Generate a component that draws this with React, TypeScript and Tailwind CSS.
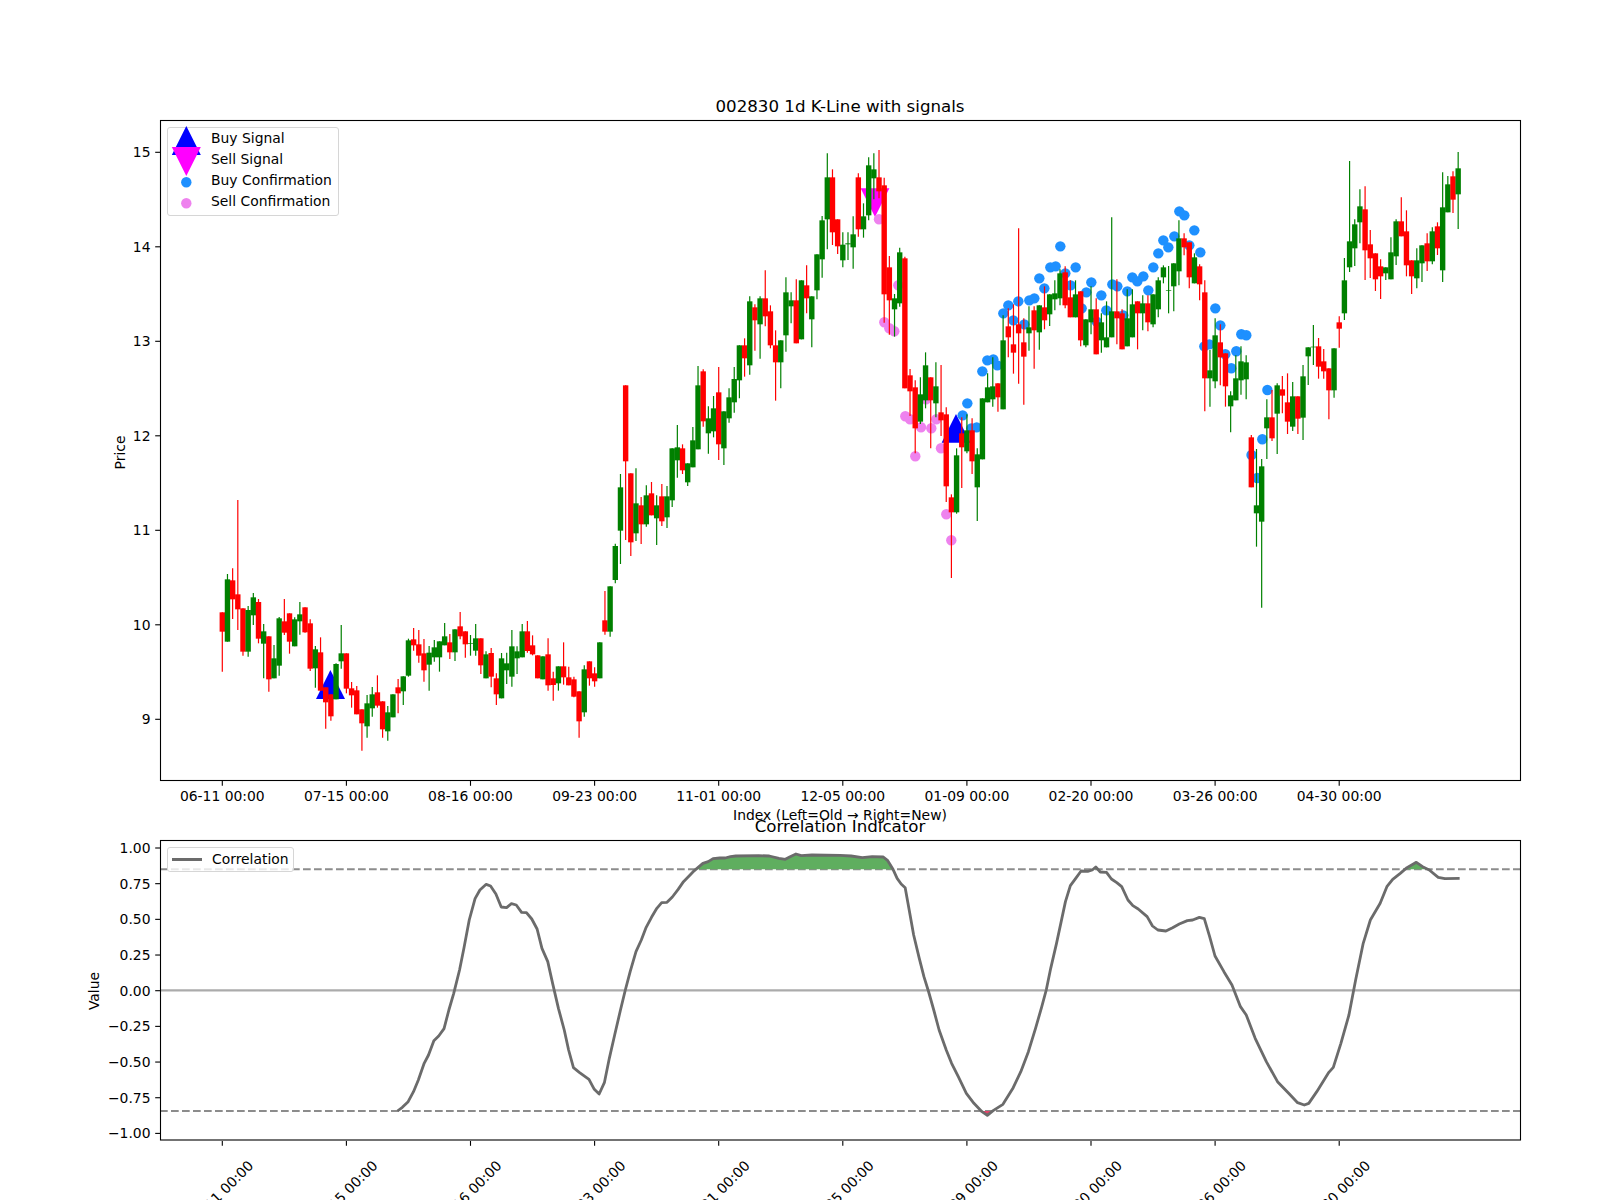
// K-line chart with signals and correlation indicator, redrawn as inline svg
type Candle = { up: boolean; top: number; bottom: number; high: number; low: number }

// each group: y offset of the read-out, then candles as colour + body top, body bottom, wick top, wick bottom
// values are in thirds of a pixel
const RAW: [number, string][] = [
  [480, "r397,455,397,575 g298,485,282,485 r301,358,265,417 r343,388,60,450 r385,515,385,527 g390,515,378,530 g352,406,339,435 r366,476,357,490 g454,491,432,595 r469,598,469,635 g535,595,495,595 g415,557,411,587 r424,458,357,465 r400,485,400,521 g418,499,412,499 g403,424,366,464 r382,457,382,458 r430,566,418,573 g508,565,498,623 r517,632,472,632 r622,667,622,746 r643,709,643,722 g552,658,550,658 g520,544,435,566 r520,626,520,640 r625,646,606,683 r631,703,618,703 r688,730,688,812 g670,739,645,773 g643,685,621,710 r637,677,586,683 r664,748,664,773 g697,754,678,782 g643,712,643,712 r622,640,597,700 g589,634,589,675 g481,587,476,590 r478,496,444,512 r493,527,450,548 r520,571,477,605 g518,554,498,632 g502,532,480,545 g484,532,484,575 g469,496,429,496 r487,517,462,537 g448,517,448,543 r439,469,396,478 r454,493,454,533 g490,492,465,527 g475,512,432,527 r475,556,475,582 g523,595,514,595 r519,590,504,622 r595,643,580,675 g535,655,519,655 g550,571,518,612 g499,590,450,620 g514,535,499,582 g454,532,432,532 r454,513,423,518 r496,523,466,526 r526,595,526,595 g529,598,529,598 r523,616,475,632 r595,615,575,662 g559,610,559,632 r559,592,487,614 r592,616,560,616 r598,650,590,652 r634,724,634,773 g568,697,556,710 r544,595,544,617 r580,604,562,620 g487,595,487,595 r421,455,333,464 g319,455,319,470"],
  [380, "g498,600,491,610 g322,452,282,552 r16,244,16,480 r280,487,280,528 g370,460,265,483 r376,433,351,492 g346,433,316,440 r340,406,306,406 g376,415,346,495 r349,424,312,438 g349,412,318,444 g205,361,205,381 g202,241,135,293 r205,271,193,282 g250,307,250,318 g181,262,141,262 g16,208,-42,208 r-26,124,-32,140 g115,160,79,221 g85,154,48,172 r37,193,-39,240 g94,205,94,255 g52,115,25,128 g-3,67,-39,98"],
  [130, "g646,751,646,805 r646,685,625,740 g514,706,499,734 r532,571,523,662 g505,583,499,686 r505,559,421,589 r544,646,526,655 r646,697,601,812 g631,697,631,775 g487,616,442,665 g511,529,487,580 r511,640,448,640 g451,628,451,628 r466,505,406,550 g499,568,499,652 g373,481,373,508 g271,388,258,443 g142,268,70,358 r142,307,118,345 r268,349,268,372 g344,391,307,412 g340,343,307,390 g313,352,259,416 r142,298,130,320 g259,298,220,323 g106,256,82,271 g118,145,70,208 r142,184,60,205"],
  [140, "r136,463,113,548 r382,481,348,584 g475,508,462,590 g337,490,323,500"],
  [130, "r385,775,380,775"],
  [340, "r106,154,87,228 r142,265,121,340 g163,245,112,252 g76,181,37,205 r112,181,112,325 g139,190,67,232 r217,241,75,288 r223,439,202,486 r472,517,463,714 g346,517,325,521 r280,322,232,444 g271,334,223,340 r271,364,235,402 g343,442,325,543 g175,358,175,358 g142,187,100,187 g139,178,52,200 r130,172,130,215"],
  [200, "g421,628,346,628 r379,412,325,472 r433,458,313,521 r373,400,85,551 r427,470,355,614 g382,400,319,452 r331,391,319,506 g316,397,316,449 r322,361,259,388 g283,343,283,378 g280,298,241,331 g220,295,208,316 r217,316,199,325 r292,352,241,352 g283,352,241,352 r274,421,274,439 g358,436,358,442 g328,367,259,403 r328,463,295,463 g367,421,340,458 g412,442,304,442 g334,412,52,412 r334,355,238,433 r340,448,328,448 g355,439,268,439 g313,412,268,412 r304,340,304,448 g310,340,286,391 r310,367,286,394 g283,373,283,382 g241,328,232,352 g202,232,196,250 g270,272,198,340 g190,259,190,334 g115,214,61,256 r115,142,100,166 r127,232,127,265 g172,250,160,250 r199,253,193,301 r277,535,241,634 g511,535,450,620 g406,544,355,565 r427,472,373,556 r460,559,460,620 g586,619,574,697 g535,601,466,601 g484,541,439,584 g487,538,466,598"],
  [140, "r892,1042,885,1042 g1096,1120,927,1220 g979,1145,957,1403 g832,865,778,957 r832,895,750,903 g736,821,730,942 r748,767,708,820 r787,845,700,882 g769,860,726,873 r769,836,769,882 g709,833,675,900 g622,649,622,735 g620,622,555,675 r619,680,594,716 r664,694,627,716 r685,751,685,838 g625,751,625,773 r547,566,529,623 g421,520,354,540 g304,382,63,396 g253,325,238,378 g199,247,148,310 r208,331,139,420 r313,355,270,414 r340,418,340,453 r379,409,358,477 g382,400,382,420 g337,418,292,418 g244,349,238,375 r244,289,172,289 r274,376,211,409 r361,409,361,462 g361,415,325,445 g316,370,316,426 r310,364,280,393 g274,364,262,373 r259,325,247,345 g202,391,97,426 g133,217,108,217 r109,179,94,219 g85,163,36,267"],
]

const candles: Candle[] = RAW.flatMap(([offset, row]) =>
  row.split(" ").map((c) => {
    const [top, bottom, high, low] = c.slice(1).split(",").map((v) => offset + Number(v) / 3)
    return { up: c[0] === "r", top, bottom, high, low }
  })
)

const candleX = (i: number) => 222.3 + 5.171 * i

// blue dots are read from a crop at (960,200), violet from crops at (900,340) and (850,140)
const BUY_DOTS = [[8,646],[22,610],[34,685],[50,682],[67,514],[82,481],[100,478],[112,496],[130,340],[145,316],[160,361],[175,304],[193,373],[208,301],[223,295],[238,235],[253,265],[271,202],[287,199],[301,139],[316,220],[332,256],[347,202],[365,325],[379,277],[394,247],[410,365],[424,286],[439,331],[457,253],[472,259],[490,346],[502,274],[517,232],[532,244],[550,229],[565,271],[580,202],[595,160],[610,121],[625,142],[643,109],[658,34],[673,46],[688,136],[703,91],[721,157],[733,439],[748,433],[766,325],[781,376]]
  .map(([x, y]) => [960 + x / 3, 200 + y / 3])
  .concat([[1225.3,354.3],[1231.3,368.3],[1236.3,351.3],[1241.3,334.3],[1246.3,335.3],[1251.5,455],[1257.2,478],[1262.3,439.3],[1267.4,390]])

const SELL_DOTS = [[879,219.3],[884.3,322.3],[889.3,328.3],[894.3,331.3],[898.3,285.3],[905.3,416.3],[910,419.3],[915.3,456.3],[921,427.3],[926,399.3],[931.3,428.3],[936.3,419.3],[941,448.3],[946.3,514.3],[951.3,540.3]]

const PRICE_TICKS = [15, 14, 13, 12, 11, 10, 9].map((p) => ({ label: String(p), y: 152.3 + (15 - p) * 94.5 }))
const DATE_TICKS = ["06-11 00:00", "07-15 00:00", "08-16 00:00", "09-23 00:00", "11-01 00:00", "12-05 00:00", "01-09 00:00", "02-20 00:00", "03-26 00:00", "04-30 00:00"]
  .map((label, i) => ({ label, x: 222.3 + i * 124.1 }))

const corrY = (v: number) => 990.7 - 142.7 * v
const CORR_TICKS = ["1.00", "0.75", "0.50", "0.25", "0.00", "−0.25", "−0.50", "−0.75", "−1.00"].map((label, i) => ({ label, y: corrY(1 - i * 0.25) }))

// correlation curve
const CURVE_A = [[655,873],[665,862],[677,845],[688,815],[698,780],[710,730],[719,705],[730,662],[740,648],[751,626],[761,570],[771,520],[783,450],[792,385],[803,300],[815,236],[825,210],[838,193],[847,198],[858,222],[869,261],[880,263],[890,251],[900,255],[911,277],[921,278],[932,297],[943,327],[953,385],[965,425],[975,490],[987,565],[999,630],[1008,690],[1018,743],[1030,757],[1050,778],[1061,808],[1071,822],[1082,787],[1092,715],[1103,645],[1115,570],[1125,510],[1135,455],[1147,395],[1158,360],[1168,322],[1179,292],[1190,265],[1200,248],[1211,247],[1222,231],[1234,208],[1245,185],[1265,155],[1285,130],[1296,125],[1306,116],[1320,114],[1331,114],[1342,110],[1353,108],[1400,107],[1422,108],[1442,115],[1455,118],[1465,110],[1477,102],[1488,107],[1510,105],[1568,106]]
const CURVE_B = [[25,108],[50,113],[72,110],[97,111],[107,122],[118,146],[128,175],[137,192],[146,203],[155,270],[165,345],[177,412],[188,470],[198,513],[210,570],[222,630],[238,690],[250,730],[265,770],[283,820],[300,850],[318,875],[330,886],[343,872],[365,853],[388,803],[405,755],[422,695],[438,625],[452,560],[462,510],[472,445],[485,370],[497,295],[505,245],[516,197],[528,175],[540,153],[555,154],[565,150],[573,141],[583,156],[597,157],[608,177],[620,188],[631,200],[645,240],[656,257],[668,267],[688,290],[700,318],[712,330],[730,333],[745,323],[760,312],[778,302],[790,300],[805,292],[816,296],[828,350],[840,408],[860,455],[878,495],[897,560],[910,585],[930,655],[955,725],[980,785],[1005,820],[1025,848],[1040,855],[1050,850],[1068,815],[1095,757],[1105,742],[1122,670],[1140,585],[1155,480],[1172,370],[1188,300],[1210,250],[1225,200],[1238,178],[1255,160],[1270,143],[1291,127],[1305,140],[1320,150],[1340,172],[1355,176],[1388,175]]

const curve = [
  ...CURVE_A.map(([x, y]) => [80 + x / 2.063, 820 + y / 3]),
  ...CURVE_B.map(([x, y]) => [840 + x / 2.24, 820 + y / 3]),
]
const curvePoints = curve.map((p) => p.join(",")).join(" ")
const upperY = 869.2
const lowerY = 1111

function PriceChart() {
  return (
    <svg className="block overflow-visible" width={1600} height={730} viewBox="0 100 1600 730">
      <text x={840} y={111.7} textAnchor="middle" fontSize={16.67}>002830 1d K-Line with signals</text>

      {/* markers sit under the candles */}
      <polygon points="330.4,670 316,699 345,699" fill="#0000ff" />
      <polygon points="956,414 941.6,442.7 970.4,442.7" fill="#0000ff" />
      <polygon points="875,217 860.6,188.3 889.4,188.3" fill="#ff00ff" />
      {BUY_DOTS.map(([x, y], i) => <circle key={i} cx={x} cy={y} r={5.2} fill="#1e90ff" />)}
      {SELL_DOTS.map(([x, y], i) => <circle key={i} cx={x} cy={y} r={5.2} fill="#ee82ee" />)}

      {candles.map((c, i) => {
        const color = c.up ? "#ff0000" : "#008000"
        const x = candleX(i)
        return (
          <g key={i}>
            <line x1={x} x2={x} y1={c.high} y2={c.low} stroke={color} strokeWidth={1.2} />
            <rect x={x - 2.7} y={c.top} width={5.4} height={c.bottom - c.top} fill={color} />
          </g>
        )
      })}

      <rect x={160.5} y={120.5} width={1360} height={660} fill="none" stroke="#000" strokeWidth={1.1} />

      {PRICE_TICKS.map((t) => (
        <g key={t.label}>
          <line x1={155.2} x2={160} y1={t.y} y2={t.y} stroke="#000" strokeWidth={1.1} />
          <text x={150.5} y={t.y + 5} textAnchor="end" fontSize={13.9}>{t.label}</text>
        </g>
      ))}
      {DATE_TICKS.map((t) => (
        <g key={t.label}>
          <line x1={t.x} x2={t.x} y1={781} y2={785.8} stroke="#000" strokeWidth={1.1} />
          <text x={t.x} y={801} textAnchor="middle" fontSize={13.9}>{t.label}</text>
        </g>
      ))}

      <text x={840} y={820} textAnchor="middle" fontSize={13.9}>Index (Left=Old → Right=New)</text>
      <text transform="translate(124.5 452.5) rotate(-90)" textAnchor="middle" fontSize={13.9}>Price</text>
    </svg>
  )
}

function CorrelationChart() {
  return (
    <svg className="block overflow-visible" width={1600} height={370} viewBox="0 830 1600 370">
      <defs>
        <clipPath id="above-upper"><rect x={160} y={840} width={1360} height={upperY - 840} /></clipPath>
        <clipPath id="below-lower"><rect x={160} y={lowerY} width={1360} height={1140 - lowerY} /></clipPath>
      </defs>

      <text x={840} y={831.7} textAnchor="middle" fontSize={16.67}>Correlation Indicator</text>

      <line x1={160} x2={1520} y1={upperY} y2={upperY} stroke="#8c8c8c" strokeWidth={2.08} strokeDasharray="7.7 3.3" />
      <line x1={160} x2={1520} y1={lowerY} y2={lowerY} stroke="#8c8c8c" strokeWidth={2.08} strokeDasharray="7.7 3.3" />
      <line x1={160} x2={1520} y1={990.4} y2={990.4} stroke="#ababab" strokeWidth={2.08} />

      <polygon points={curvePoints} fill="#5fae5f" clipPath="url(#above-upper)" />
      <polygon points={curvePoints} fill="#e8446a" clipPath="url(#below-lower)" />
      <polyline points={curvePoints} fill="none" stroke="#6b6b6b" strokeWidth={2.8} strokeLinejoin="round" />

      <rect x={160.5} y={840.5} width={1360} height={299.5} fill="none" stroke="#000" strokeWidth={1.1} />

      {CORR_TICKS.map((t) => (
        <g key={t.label}>
          <line x1={155.2} x2={160} y1={t.y} y2={t.y} stroke="#000" strokeWidth={1.1} />
          <text x={150.5} y={t.y + 5} textAnchor="end" fontSize={13.9}>{t.label}</text>
        </g>
      ))}
      {DATE_TICKS.map((t) => (
        <g key={t.label}>
          <line x1={t.x} x2={t.x} y1={1141} y2={1145.8} stroke="#000" strokeWidth={1.1} />
          <text transform={`translate(${t.x - 1.5} 1193) rotate(-45)`} y={5} textAnchor="middle" fontSize={13.9}>{t.label}</text>
        </g>
      ))}

      <text transform="translate(99 991) rotate(-90)" textAnchor="middle" fontSize={13.9}>Value</text>
    </svg>
  )
}

function SignalLegend() {
  return (
    <div className="absolute left-[167px] top-[27px] h-[89px] w-[172px] rounded-[3px] border border-[#d6d6d6] bg-white/80 text-[13.9px] leading-[21px] text-black">
      <svg className="absolute left-0 top-0 overflow-visible" width={40} height={84}>
        <polygon points="18.3,-2 3.8,27 32.8,27" fill="#0000ff" />
        <polygon points="18.3,48 3.8,19 32.8,19" fill="#ff00ff" />
        <circle cx={18.3} cy={54.3} r={5.2} fill="#1e90ff" />
        <circle cx={18.3} cy={75.3} r={5.2} fill="#ee82ee" />
      </svg>
      <div className="pl-[43px]">
        <div className="h-[21px]">Buy Signal</div>
        <div className="h-[21px]">Sell Signal</div>
        <div className="h-[21px]">Buy Confirmation</div>
        <div className="h-[21px]">Sell Confirmation</div>
      </div>
    </div>
  )
}

function CorrelationLegend() {
  return (
    <div className="absolute left-[167px] top-[17px] flex h-[25px] w-[127px] items-center rounded-[3px] border border-[#d6d6d6] bg-white/80 pl-[4px] text-[13.9px] text-black">
      <span className="h-[3px] w-[30px] bg-[#6b6b6b]" />
      <span className="ml-[10px]">Correlation</span>
    </div>
  )
}

export default function App() {
  return (
    <div className="flex h-[1200px] w-[1600px] flex-col overflow-hidden bg-white pt-[100px] font-['DejaVu_Sans',sans-serif]">
      <div className="relative h-[730px]">
        <PriceChart />
        <SignalLegend />
      </div>
      <div className="relative h-[370px]">
        <CorrelationChart />
        <CorrelationLegend />
      </div>
    </div>
  )
}
